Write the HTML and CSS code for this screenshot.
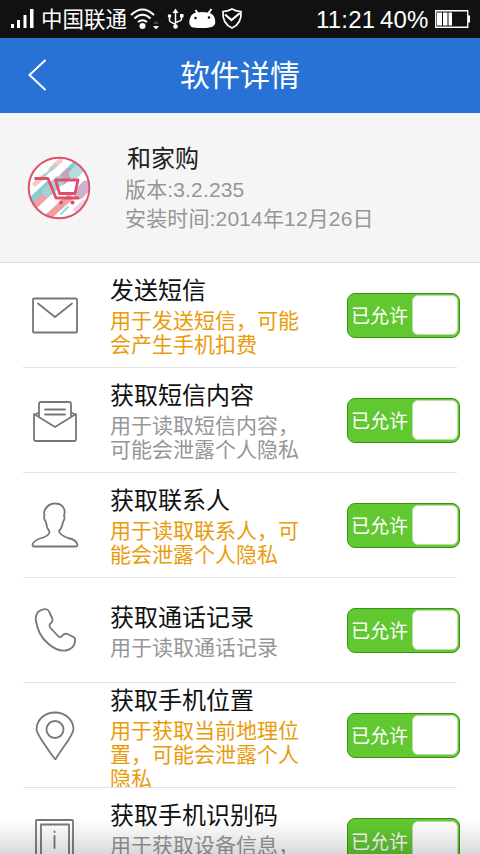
FILE: index.html
```
<!DOCTYPE html>
<html lang="zh-CN">
<head>
<meta charset="utf-8">
<title>软件详情</title>
<link rel="stylesheet" href="styles.css">
</head>
<body>
<div class="screen">
  <div class="status">
    <svg class="signal" width="26" height="22" viewBox="0 0 26 22" fill="#fff"><path d="M1 16h3v4H1zM7 12h3v8H7zM13.500 7h3v13h-3zM20 1h3.500v19H20z"/></svg>
    <span class="carrier">中国联通</span>
    <svg class="indicators" width="116" height="26" viewBox="128 6 116 26" fill="none" stroke="#fff">
      <path d="M131 15q11.500-11 23 0M134.500 18.500q8-7.500 16 0M138 22q4.500-3.500 9 0" stroke-width="2"/>
      <circle cx="142.500" cy="26" r="3" fill="#fff" stroke="none"/>
      <path d="M153 26h6l-3 3.500z" fill="#fff" stroke="none"/><path d="M153 24h6l-3-3.500z" fill="#444" stroke="none"/>
      <path d="M175.500 12v15M169.500 16v4.500q0 1.500 6 3.500M181.500 15v4q0 2-6 3.500" stroke-width="1.500"/>
      <path d="M172.500 13l3-4.500 3 4.500zM180 14h3.500v3.500H180z" fill="#fff" stroke="none"/><circle cx="169.500" cy="16" r="1.800" fill="#fff" stroke="none"/><circle cx="175.500" cy="26.500" r="2.300" fill="#fff" stroke="none"/>
      <path d="M195.500 10l2.500 4M211.500 9l-3 4" stroke-width="2"/>
      <path d="M190.500 17q1.500-4 6-4.500 6-1 11 0 5 .5 7 5 2 6-1 8.500-3 2-11 2t-11-1q-4-3-1-10z" fill="#fff" stroke="none"/>
      <circle cx="195.500" cy="18" r="1.300" fill="#111" stroke="none"/><circle cx="209" cy="17.500" r="1.300" fill="#111" stroke="none"/>
      <path d="M232 9q4.500 2.500 9 2.500 1 12-9 16.500-10-4.500-9-16.500 4.500 0 9-2.500z" stroke-width="1.700"/><path d="M225 14.500l6.500 5.500 8.500-7" stroke-width="2.200"/>
    </svg>
    <span class="clock">11:21</span>
    <span class="percent">40%</span>
    <svg class="battery" width="36" height="20" viewBox="0 0 36 20"><path d="M.75 1.750h32v16.500h-32z" fill="none" stroke="#fff" stroke-width="1.300"/><path d="M2 3.500h5v13H2zM8 3.500h4.500v13H8zM13.500 3.500H17v13h-3.500zM33 6.500h2v7h-2z" fill="#fff"/></svg>
  </div>
  <header class="header">
    <svg class="back" width="22" height="34" viewBox="0 0 22 34"><path d="M18.500 1L2.500 16l16 15" fill="none" stroke="#fff" stroke-width="2"/></svg>
    <h1 class="heading">软件详情</h1>
  </header>
  <section class="app">
    <svg class="logo" width="64" height="64" viewBox="0 0 64 64" fill="none" stroke-linecap="round">
      <defs><clipPath id="disc"><circle cx="32" cy="32" r="30"/></clipPath></defs>
      <circle cx="32" cy="32" r="30.500" fill="#fff"/>
      <g clip-path="url(#disc)">
        <path d="M5 44L22 28M49 8L38 19" stroke="#81cfd2" stroke-width="7"/>
        <path d="M35 24l7-7" stroke="#bda6c1" stroke-width="10"/>
        <path d="M47 18l7-7" stroke="#b3dcda" stroke-width="10"/>
        <path d="M52 38l7-8" stroke="#ccb3cb" stroke-width="11"/>
        <path d="M7 50L25 33M22 60l20-18" stroke="#efa0a5" stroke-width="7"/>
        <path d="M8 28l9-8M24 13l9-8" stroke="#f5c9c8" stroke-width="5"/>
        <path d="M15 22l14-13M34 58l7-7" stroke="#8ddbe1" stroke-width="2"/>
        <path d="M20 36l12-11" stroke="#a9ced3" stroke-width="10"/>
        <path d="M48 54l9-8" stroke="#e8d2e3" stroke-width="4"/>
      </g>
      <circle cx="32" cy="32" r="30.300" stroke="#df526c" stroke-width="2"/>
      <path d="M8.500 22.500h12.500l8 19.500h22M28.500 24h22.500l-3 13.500H32.500z" stroke="#df4f6c" stroke-width="2.800" stroke-linejoin="round"/>
      <circle cx="34" cy="46.500" r="2" fill="#e44868"/><circle cx="45.500" cy="46.500" r="2" fill="#e44868"/>
    </svg>
    <div class="meta">
      <div class="name">和家购</div>
      <div>版本:3.2.235</div>
      <div>安装时间:2014年12月26日</div>
    </div>
  </section>
  <main class="list">
    <div class="row">
      <svg class="icon" viewBox="0 0 50 50"><rect x="3" y="8.500" width="44" height="34" rx="1"/><path d="M8 13.500L25 27l17-13.500"/></svg>
      <div class="text"><h2 class="title">发送短信</h2><p class="desc warn">用于发送短信，可能会产生手机扣费</p></div>
      <div class="toggle"><span class="state">已允许</span><span class="knob"></span></div>
    </div>
    <div class="row">
      <svg class="icon" viewBox="0 0 50 50"><path d="M9 22V9q0-2 2-2h28q2 0 2 2V22M9 17.500l-5 2.500v24q0 2 2 2h38q2 0 2-2V20l-5-2.500M4 19l21 13 21-13M15 14.500h20M15 19.500h20"/></svg>
      <div class="text"><h2 class="title">获取短信内容</h2><p class="desc">用于读取短信内容，可能会泄露个人隐私</p></div>
      <div class="toggle"><span class="state">已允许</span><span class="knob"></span></div>
    </div>
    <div class="row">
      <svg class="icon" viewBox="0 0 50 50"><path d="M14 12q3-8.500 11-8.500 5 0 7 2.500 4 3 2 10 1.500 2-1 6-1 6-4 9 .5 4 9 7 9 2 9.500 7 0 1.500-1.500 1.500H4q-1.500 0-1.500-1.500.5-4 7.500-6.500 10-3 9.500-7-3-3.500-3.500-9.500-3-4-1.500-6z"/></svg>
      <div class="text"><h2 class="title">获取联系人</h2><p class="desc warn">用于读取联系人，可能会泄露个人隐私</p></div>
      <div class="toggle"><span class="state">已允许</span><span class="knob"></span></div>
    </div>
    <div class="row">
      <svg class="icon" viewBox="0 0 50 50"><path d="M8 7q5-4 9-2.500 1.500.5 2.500 3l3 6.500q.5 2-1 3.500-3.500 2.500-1 5.500l8 8.500q2.500 1.500 4-1 2-2.500 5-1.500l6 3q2.500 1.500 1.500 5-1.500 7-9 8.500-8 1.500-18-7T6 16q-1-5 2-9z"/></svg>
      <div class="text"><h2 class="title">获取通话记录</h2><p class="desc">用于读取通话记录</p></div>
      <div class="toggle"><span class="state">已允许</span><span class="knob"></span></div>
    </div>
    <div class="row long">
      <svg class="icon" viewBox="0 0 50 50"><path d="M25.500 49.500Q23 47 15 35 6.500 23 6.500 19C7 9 15 2.500 25 2.500S43 9 43.500 19q0 4-8.500 16T25.500 49.500z"/><circle cx="25" cy="19.500" r="8.500"/></svg>
      <div class="text"><h2 class="title">获取手机位置</h2><p class="desc warn">用于获取当前地理位置，可能会泄露个人隐私</p></div>
      <div class="toggle"><span class="state">已允许</span><span class="knob"></span></div>
    </div>
    <div class="row">
      <svg class="icon" viewBox="0 0 50 50"><rect x="6" y="5" width="37" height="42" rx="1"/><rect x="11" y="9.500" width="28" height="33"/><path d="M24.500 16.500v.5M24.500 21v12"/></svg>
      <div class="text"><h2 class="title">获取手机识别码</h2><p class="desc">用于获取设备信息，</p></div>
      <div class="toggle"><span class="state">已允许</span><span class="knob"></span></div>
    </div>
  </main>
  <div class="fade"></div>
</div>
</body>
</html>
```
FILE: styles.css
```
* { box-sizing: border-box; }
body, h1, h2, p { margin: 0; font-weight: 400; }
body { font-family: "Liberation Sans", "Noto Sans CJK SC", sans-serif; background: #fff; }
svg { display: block; flex: none; }
.screen { position: relative; width: 480px; height: 854px; overflow: hidden; }
.status { display: flex; align-items: center; height: 38px; padding-left: 10px; background: #111; color: #fff; white-space: nowrap; }
.carrier { width: 87px; margin-left: 5px; padding-bottom: 3px; font-size: 21.500px; }
.clock { width: 64px; margin-left: 72px; padding-top: 1px; font-size: 24px; letter-spacing: .2px; }
.percent { width: 51px; padding-top: 1px; font-size: 24px; letter-spacing: .2px; }
.battery { margin-left: 4px; }
.header { display: flex; align-items: center; height: 75px; padding-left: 27px; background: #2871d5; color: #fff; }
.heading { margin-left: 131px; font-size: 30px; line-height: 40px; }
.app { display: flex; height: 150px; padding: 43px 0 0 27px; background: #f5f5f5; border-bottom: 1px solid #dedede; }
.meta { margin: -13px 0 0 34px; color: #969696; font-size: 21px; line-height: 29px; letter-spacing: .15px; }
.name { margin-left: 2px; color: #202020; font-size: 24px; line-height: 31px; margin-bottom: 1px; letter-spacing: 0; }
.list { width: 480px; }
.row { display: flex; align-items: center; height: 105px; margin: 0 23px; padding-left: 7px; border-bottom: 1px solid #e2e2e2; }
.icon { width: 50px; height: 50px; fill: none; stroke: #777; stroke-width: 1.800; stroke-linecap: round; stroke-linejoin: round; }
.text { width: 196px; margin-left: 30px; }
.title { height: 35px; color: #111; font-size: 24px; line-height: 33px; white-space: nowrap; }
.desc { color: #969696; font-size: 21px; line-height: 24px; }
.warn { color: #e99b0c; }
.long .text { align-self: flex-start; height: 104px; padding-top: 1px; overflow: hidden; }
.row:last-child { align-items: flex-start; border-bottom: 0; }
.row:last-child .icon { margin-top: 27px; }
.row:last-child .text { margin-top: 11px; }
.row:last-child .toggle { margin-top: 30px; }
.toggle { display: flex; flex: none; align-items: center; justify-content: space-between; width: 113px; height: 45px; margin: 0 -3px 0 auto; padding: 0 1px 0 3px; border: 1px solid #38940f; border-radius: 8px; background: #62c832; }
.state { padding-top: 4px; color: #fff; font-size: 19px; line-height: 24px; white-space: nowrap; }
.knob { width: 46px; height: 40px; border: 1px solid #bddcae; border-radius: 6px; background: #fff; }
.fade { position: absolute; left: 0; right: 0; bottom: 0; height: 34px; background: linear-gradient(rgba(0,0,0,0), rgba(0,0,0,.15)); }
```
